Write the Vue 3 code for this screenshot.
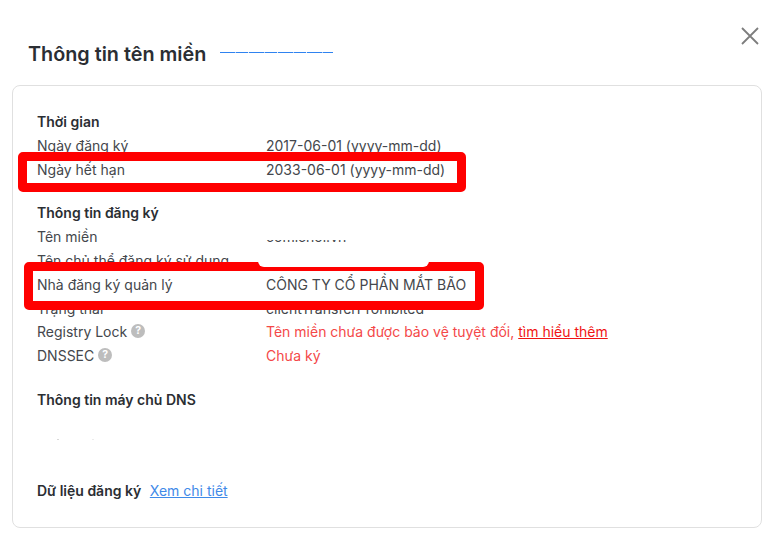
<script setup>
const registered = [
  { label: 'Tên miền', value: 'comichoi.vn' },
  { label: 'Tên chủ thể đăng ký sử dụng', value: '' },
  { label: 'Nhà đăng ký quản lý', value: 'CÔNG TY CỔ PHẦN MẮT BÃO' },
  { label: 'Trạng thái', value: 'clientTransferProhibited' }
]
</script>

<template>
  <div class="page">
    <header class="head">
      <h1 class="title">Thông tin tên miền</h1>
      <span class="scrap"></span>
      <svg class="close" width="18" height="18" viewBox="0 0 18 18" aria-label="Đóng">
        <path d="M1 1 L17 17 M17 1 L1 17" stroke="#7d7d7d" stroke-width="1.8" fill="none" />
      </svg>
    </header>

    <main class="card">
      <section class="group">
        <h2 class="heading">Thời gian</h2>
        <div class="row"><span class="label">Ngày đăng ký</span><span>2017-06-01 (yyyy-mm-dd)</span></div>
        <div class="row"><span class="label">Ngày hết hạn</span><span>2033-06-01 (yyyy-mm-dd)</span></div>
      </section>

      <section class="group">
        <h2 class="heading">Thông tin đăng ký</h2>
        <div v-for="r in registered" :key="r.label" class="row">
          <span class="label">{{ r.label }}</span><span>{{ r.value }}</span>
        </div>
        <div class="row">
          <span class="label">Registry Lock <i class="help">?</i></span>
          <span class="bad">Tên miền chưa được bảo vệ tuyệt đối, <a class="bad-link">tìm hiểu thêm</a></span>
        </div>
        <div class="row">
          <span class="label">DNSSEC <i class="help">?</i></span>
          <span class="bad">Chưa ký</span>
        </div>
      </section>

      <section class="group dns">
        <h2 class="heading">Thông tin máy chủ DNS</h2>
        <div class="specks"><span class="speck"></span><span class="speck faint"></span></div>
      </section>

      <footer class="foot">
        <strong class="foot-label">Dữ liệu đăng ký</strong>
        <a class="more">Xem chi tiết</a>
      </footer>
    </main>

    <div class="mask mask-a"></div>
    <div class="mark mark-a"></div>
    <div class="mark mark-b"></div>
    <div class="mask mask-b"></div>
  </div>
</template>

<style>
html, body { margin: 0; background: #fff; }
</style>

<style scoped>
.page {
  position: relative;
  width: 774px;
  height: 550px;
  overflow: hidden;
  background: #fff;
  font-family: Inter, "Liberation Sans", sans-serif;
  font-size: 14px;
  color: #44474c;
}
.head {
  display: flex;
  align-items: flex-start;
  height: 85px;
  padding: 0 15px 0 28px;
  box-sizing: border-box;
}
.title {
  margin: 41px 0 0;
  font-size: 19.8px;
  line-height: 26px;
  font-weight: 600;
  color: #2b2e33;
}
.scrap {
  width: 113px;
  height: 1px;
  margin: 52px 0 0 14px;
  background: repeating-linear-gradient(90deg, #2f83f0 0 15px, #a9ccf9 15px 16px, #2f83f0 16px 28px, #dbe9fd 28px 29px);
}
.close { margin: 27px 0 0 auto; }
.card {
  width: 750px;
  height: 443px;
  margin-left: 12px;
  padding: 24px 24px 0;
  box-sizing: border-box;
  border: 1px solid #e0e0e0;
  border-radius: 8px;
}
.group { margin-bottom: 20px; }
.heading {
  margin: 0;
  font-size: 14px;
  line-height: 23.8px;
  font-weight: 600;
  color: #2b2e33;
}
.row {
  display: flex;
  height: 23.8px;
  line-height: 23.8px;
}
.label { width: 229px; flex: none; }
.help {
  display: inline-block;
  width: 14px;
  height: 14px;
  border-radius: 50%;
  background: #bdbdbd;
  color: #fff;
  font-size: 10.5px;
  line-height: 14px;
  font-style: normal;
  font-weight: 700;
  text-align: center;
  vertical-align: 3px;
}
.bad { color: #f44848; }
.bad-link { color: #f01414; text-decoration: underline; }
.dns { height: 71px; }
.specks {
  display: flex;
  gap: 33px;
  margin: 27px 0 0 20px;
}
.speck { width: 2px; height: 1px; background: #d8d8d8; }
.speck.faint { background: #ececec; }
.foot {
  display: flex;
  gap: 8.5px;
  line-height: 24px;
}
.foot-label { font-weight: 600; color: #2b2e33; }
.more { color: #3f8ae8; text-decoration: underline; }
.mark {
  position: absolute;
  box-sizing: border-box;
  border: 9px solid #ff0000;
  border-radius: 5px;
}
.mark-a { left: 18px; top: 152px; width: 448px; height: 40px; }
.mark-b { left: 24px; top: 262px; width: 460px; height: 48px; }
.mask { position: absolute; background: #fff; }
.mask-a { left: 258px; top: 226px; width: 100px; height: 14px; }
.mask-b { left: 258px; top: 242px; width: 171px; height: 25px; border-radius: 0 0 6px 6px; }
</style>
